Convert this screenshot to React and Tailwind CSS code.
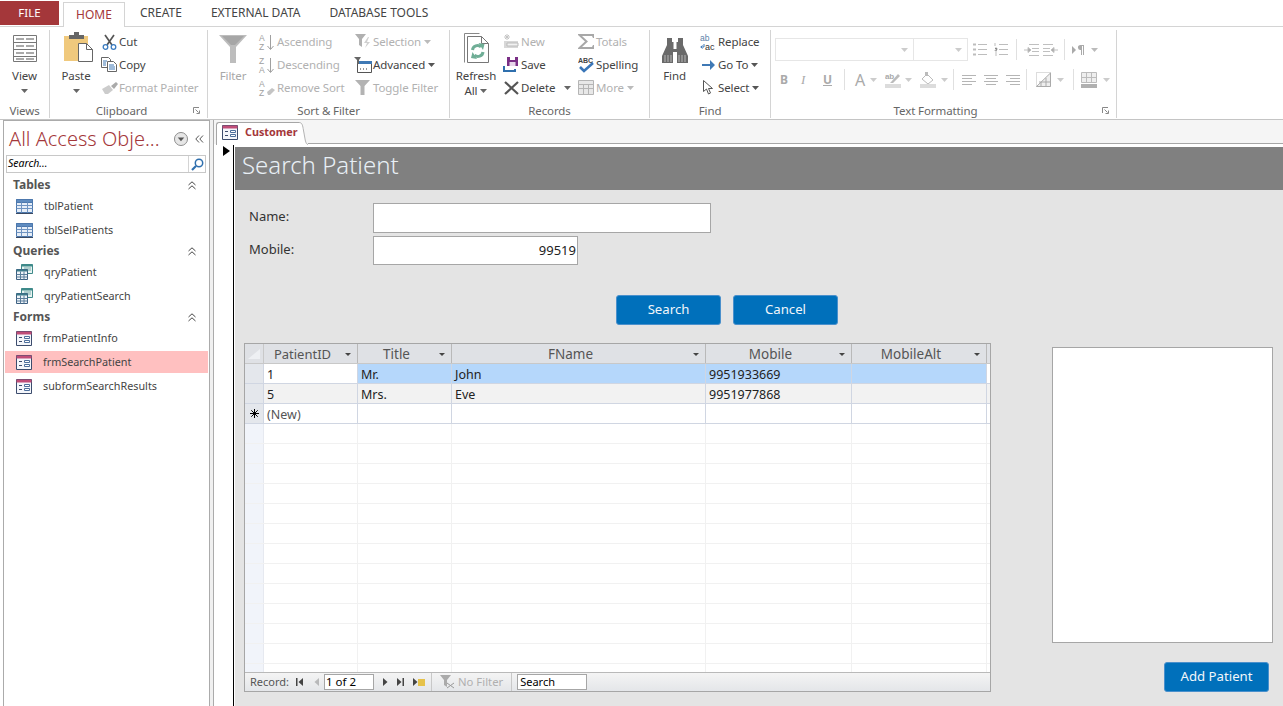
import React from "react";

const Caret = ({ c = "#666", w = 7 }) => (
  <svg width={w} height={w === 7 ? 4 : 3} viewBox="0 0 7 4" preserveAspectRatio="none" className="shrink-0">
    <path d="M0 0h7L3.5 4z" fill={c} />
  </svg>
);

const ViewIcon = () => (
  <svg width="26" height="29" viewBox="0 0 26 29" fill="none" stroke="#777">
    <path d="M1.5 1.5h23M1.5 8.5h23M1.500 15.500h23M1.500 22.500h23M1.500 27.500h23M1.500 1.500v26M24.500 1.500v26" />
    <path d="M4 5h8M4 12h8M4 19h8M4 25h8M14 5h8M14 12h8M14 19h8M14 25h8" stroke="#aaa" strokeWidth="2" />
  </svg>
);
const PasteIcon = () => (
  <svg width="30" height="32" viewBox="0 0 30 32" className="ml-[5px]">
    <path d="M0 5h24v25H0z" fill="#f0c97d" />
    <path d="M5 4h5V1h5v3h5v4H5z" fill="#666" />
    <path d="M14.500 12.500h8l6 6v12h-14z" fill="#fff" stroke="#666" />
    <path d="M22.500 12.500v6h6" fill="none" stroke="#666" />
  </svg>
);
const CutIcon = () => (
  <svg width="15" height="16" viewBox="0 0 15 16" fill="none">
    <path d="M3 1l7 10M12 1L5 11" stroke="#555" strokeWidth="1.700" />
    <circle cx="3.500" cy="13" r="2.300" stroke="#3b7cc0" strokeWidth="1.300" />
    <circle cx="11.500" cy="13" r="2.300" stroke="#3b7cc0" strokeWidth="1.300" />
  </svg>
);
const CopyIcon = () => (
  <svg width="16" height="15" viewBox="0 0 16 15" fill="#fff" stroke="#666">
    <path d="M.5.5h7l2 2v8h-9z" />
    <path d="M6.500 4.500h6l3 3v7h-9z" />
    <path d="M2 4h4M2 6h3M2 8h3M8 8h5M8 10h6M8 12h6" stroke="#3f79b5" />
  </svg>
);
const PainterIcon = () => (
  <svg width="17" height="14" viewBox="0 0 17 14">
    <path d="M1 8l7-4 4 5-5 4H4z" fill="#ccc" />
    <path d="M10 5l5-4 2 2-4 5z" fill="#aaa" />
  </svg>
);
const FunnelBig = () => (
  <svg width="28" height="28" viewBox="0 0 28 28">
    <path d="M0 0h28L17 12v16h-6V12z" fill="#bdbdbd" />
    <path d="M3 1h22l-9 9h-4z" fill="#a6a6a6" />
  </svg>
);
const SortIcon = ({ a, b, eraser }) => (
  <svg width="17" height="18" viewBox="0 0 17 18" className="overflow-visible">
    <text x="0" y="7.500" fontSize="8.500" fontFamily="Liberation Sans" fill="#a0a0a0">{a}</text>
    <text x="0" y="17" fontSize="8.500" fontFamily="Liberation Sans" fill="#a0a0a0">{b}</text>
    {eraser ? (
      <path d="M8 13l5-4 3 2-5 5H9z" fill="#c4c4c4" />
    ) : (
      <path d="M11.500 2v14M8.500 13l3 3.500 3-3.500" fill="none" stroke="#a0a0a0" />
    )}
  </svg>
);
const SelectionIcon = () => (
  <svg width="17" height="15" viewBox="0 0 17 15">
    <path d="M0 0h11L7 5v8l-3-2V5z" fill="#b0b0b0" />
    <path d="M13 3l-4 6h3l-2 5 5-6h-3l2-5z" fill="#d0d0d0" />
  </svg>
);
const AdvancedIcon = () => (
  <svg width="18" height="16" viewBox="0 0 18 16">
    <path d="M3.500 4.500h14v11h-14z" fill="#fff" stroke="#555" />
    <path d="M4 4h14v3H4z" fill="#3f79b5" />
    <path d="M6 12h1M9 12h1M12 12h1" stroke="#333" />
    <path d="M0 0h7L5 3v4H3V3z" fill="#666" />
  </svg>
);
const ToggleIcon = () => (
  <svg width="16" height="15" viewBox="0 0 16 15">
    <path d="M0 0h15L9.500 6v9h-4V6z" fill="#b3b3b3" />
  </svg>
);
const RefreshIcon = () => (
  <svg width="25" height="30" viewBox="0 0 25 30" fill="none">
    <path d="M.5 29.500V.5h15" stroke="#888" />
    <path d="M3.500 29.500V3.500h14l7 7v19z" fill="#fff" stroke="#777" />
    <path d="M17.500 3.500v7h7" stroke="#777" />
    <path d="M8.500 17a5 5 0 0 1 8.500-3M19 19a5 5 0 0 1-8.500 3" stroke="#6fae96" strokeWidth="3" />
    <path d="M14.500 10l6 1-1.500 6zM13 26l-6-1 1.500-6z" fill="#6fae96" />
  </svg>
);
const NewIcon = () => (
  <svg width="16" height="15" viewBox="0 0 16 15">
    <path d="M1 7h14v7H1z" fill="#d8d8d8" />
    <path d="M4 9h11v3H4z" fill="#f2f2f2" stroke="#bbb" />
    <path d="M4 0v6M1 3h6M2 1l4 4M6 1L2 5" stroke="#c4c4c4" />
  </svg>
);
const SaveIcon = () => (
  <svg width="16" height="15" viewBox="0 0 16 15">
    <path d="M4 0h11v9H4z" fill="#7a2f86" />
    <path d="M7 0h5v3H7z" fill="#fff" />
    <path d="M6.500 5h6v4h-6z" fill="#e7d6ea" />
    <path d="M0 9h2v4h9v-1h2v3H0z" fill="#2f6fad" />
  </svg>
);
const DeleteIcon = () => (
  <svg width="15" height="14" viewBox="0 0 15 14">
    <path d="M1 1l13 12M14 1L1 13" stroke="#555" strokeWidth="2.200" />
  </svg>
);
const SigmaIcon = () => (
  <svg width="17" height="15" viewBox="0 0 17 15">
    <path d="M0 0h16v4h-1l-1-2H4l6 5.500L4 13h10l1-2h1v4H0v-1l7-6.500L0 1z" fill="#a8a8a8" />
  </svg>
);
const SpellIcon = () => (
  <svg width="17" height="17" viewBox="0 0 17 17">
    <text x="0" y="6.500" fontSize="7" fontWeight="700" fontFamily="Liberation Sans" fill="#444">ABC</text>
    <path d="M2 11l4 4 9-8" fill="none" stroke="#3a76b8" strokeWidth="2.600" />
  </svg>
);
const MoreIcon = () => (
  <svg width="16" height="15" viewBox="0 0 16 15" fill="#e8e8e8" stroke="#b5b5b5">
    <path d="M.5.5h15v14H.5z" />
    <path d="M.5 4.500h15M.5 8.500h15M5.500 4.500v10M10.500 4.500v10" fill="none" />
  </svg>
);
const BinocularsIcon = () => (
  <svg width="26" height="25" viewBox="0 0 26 25">
    <path d="M5 0h5v4h1.500v7h3V4H16V0h5v7l5 11v7H15V14h-4v11H0v-7L5 7z" fill="#6a6a6a" />
    <path d="M3 17v7M6 17v7M9 17v7M17 17v7M20 17v7M23 17v7" stroke="#b8b8b8" />
  </svg>
);
const ReplaceIcon = () => (
  <svg width="17" height="18" viewBox="0 0 17 18" className="overflow-visible">
    <text x="0" y="7.500" fontSize="8.500" fontFamily="Liberation Sans" fill="#5a7fa8">ab</text>
    <text x="5" y="17" fontSize="9" fontFamily="Liberation Sans" fill="#333">ac</text>
    <path d="M4 11v3H.8M2.500 12.500L.8 14l1.700 1.500" stroke="#3a76b8" fill="none" />
  </svg>
);
const GoToIcon = () => (
  <svg width="13" height="10" viewBox="0 0 13 10">
    <path d="M0 4h8V0l5 5-5 5V6H0z" fill="#3f79b5" />
  </svg>
);
const CursorIcon = () => (
  <svg width="10" height="15" viewBox="0 0 10 15">
    <path d="M.5.5v11l3-2.500 2 5 2-1-2-4.500h4z" fill="#fff" stroke="#555" />
  </svg>
);
const Launcher = () => (
  <svg width="7" height="7" viewBox="0 0 7 7" fill="none" stroke="#888">
    <path d="M.5 6V.5H6" />
    <path d="M2.500 2.500l3 3M6.500 3.500v3h-3" />
  </svg>
);

const BulletsIcon = ({ num }) => (
  <svg width="14" height="15" viewBox="0 0 14 15" stroke="#bdbdbd">
    <path d="M5 2.500h9M5 7.500h9M5 12.500h9" />
    {num ? <path d="M1 1v3M1 6h2v2H1v1h2M1 11h2M1 13h2" /> : <path d="M0 2.500h3M0 7.500h3M0 12.500h3" strokeWidth="2" />}
  </svg>
);
const IndentIcon = ({ flip }) => (
  <svg width="15" height="12" viewBox="0 0 15 12" stroke="#c0c0c0" className={flip ? "-scale-x-100" : ""}>
    <path d="M5 .5h10M8 4.500h7M8 7.500h7M5 11.500h10M0 6h6" />
    <path d="M4 3.500L7 6 4 8.500z" fill="#a8a8a8" />
  </svg>
);
const ParaIcon = () => (
  <svg width="12" height="10" viewBox="0 0 12 10">
    <path d="M0 1l4 4-4 4z" fill="#aaa" />
    <path d="M8 0h4v10h-1V1h-1v9H9V5a2.500 2.500 0 0 1-1-5z" fill="#aaa" />
  </svg>
);
const HighlightIcon = () => (
  <svg width="16" height="16" viewBox="0 0 16 16">
    <text x="0" y="7" fontSize="8" fontFamily="Liberation Sans" fill="#aaa">ab</text>
    <path d="M6 10l7-8 2 2-7 7H5z" fill="#bbb" />
    <path d="M0 12h16v4H0z" fill="#dcdcdc" />
  </svg>
);
const FillIcon = () => (
  <svg width="16" height="16" viewBox="0 0 16 16">
    <path d="M2 7l5-5 6 6-5 4z" fill="#fff" stroke="#bbb" />
    <path d="M5 0h3v4H5z" fill="#bbb" />
    <path d="M0 12h16v4H0z" fill="#dcdcdc" />
  </svg>
);
const AlignIcon = ({ mode }) => {
  const d = {
    left: "M0 .5h14M0 3.500h10M0 6.500h14M0 9.500h10",
    center: "M0 .5h14M2 3.500h10M0 6.500h14M2 9.500h10",
    right: "M0 .5h14M4 3.500h10M0 6.500h14M4 9.500h10",
  };
  return (
    <svg width="14" height="10" viewBox="0 0 14 10" stroke="#b5b5b5">
      <path d={d[mode]} />
    </svg>
  );
};
const GridBgIcon = () => (
  <svg width="15" height="15" viewBox="0 0 15 15" fill="none">
    <path d="M.5.5h14v14H.5z" stroke="#bbb" strokeDasharray="1 1" />
    <path d="M.5 14.500L14.500 1v13.500zM5 14V10M10 14V6M3 10h11" fill="#eee" stroke="#aaa" />
  </svg>
);
const GridLineIcon = () => (
  <svg width="16" height="16" viewBox="0 0 16 16" fill="none">
    <path d="M.5.5h15v10H.5zM.5 5.500h15M5.500.5v10M10.500.5v10" stroke="#bbb" fill="#eee" />
    <path d="M0 12h16v4H0z" fill="#b0b0b0" />
  </svg>
);

const TableIcon = () => (
  <svg width="17" height="15" viewBox="0 0 17 15" className="shrink-0">
    <path d="M.5.5h16v13H.5z" fill="#e6eef8" stroke="#4d78ad" />
    <path d="M.5.5h16v3H.5z" fill="#5f8cc0" stroke="#4d78ad" />
    <path d="M.5 6.500h16M.5 9.500h16M5.500 3.500v10M11.500 3.500v10" stroke="#6f94c2" fill="none" />
    <path d="M0 14.500h17" stroke="#3a4a63" />
  </svg>
);
const QueryIcon = () => (
  <svg width="17" height="16" viewBox="0 0 17 16" className="shrink-0">
    <path d="M5.500.5h11v9h-11z" fill="#e8f3f2" stroke="#3f8a8a" />
    <path d="M5.500.5h11v2h-11z" fill="#3f8a8a" />
    <path d="M8 4h7M8 6h7" stroke="#7aa" />
    <path d="M.5 5.500h11v10H.5z" fill="#eef3f8" stroke="#3d5f80" />
    <path d="M.5 5.500h11v2h-11z" fill="#3d7a8a" />
    <path d="M.5 10.500h11M.5 13h11M4.500 7.500v8M8 7.500v8" stroke="#5a7d9a" fill="none" />
  </svg>
);
const FormIcon = () => (
  <svg width="16" height="15" viewBox="0 0 16 15" className="shrink-0">
    <path d="M.5.5h15v14H.5z" fill="#f4f6fb" stroke="#3c4c6d" />
    <path d="M.5.5h15v3H.5z" fill="#c04d78" />
    <path d="M3 6.500h3M3 10.500h3" stroke="#3c4c6d" />
    <path d="M8.500 5.500h5v2h-5zM8.500 9.500h5v2h-5z" fill="#fff" stroke="#4d6f9c" />
  </svg>
);
const DoubleUp = () => (
  <svg width="8" height="9" viewBox="0 0 8 9" fill="none" stroke="#444">
    <path d="M.5 4L4 .8 7.500 4M.5 8L4 4.800 7.500 8" />
  </svg>
);

const Small = ({ icon, label, off, caret, w, tail }) => (
  <div className="flex h-[23px] items-center">
    <div className={`flex h-full shrink-0 items-center justify-center ${w || "w-[18px]"}`}>{icon}</div>
    <span className={`ml-px whitespace-nowrap ${off ? "text-[#b1b1b1]" : "text-[#444]"}`}>{label}</span>
    {caret && <span className="ml-[3px]"><Caret c={off ? "#bbb" : "#555"} /></span>}
    {tail}
  </div>
);

const Group = ({ w, label, launcher, labelCls, children }) => (
  <div className={`flex h-[88px] shrink-0 flex-col border-r border-[#d4d4d4] ${w}`}>
    <div className="flex h-[73px]">{children}</div>
    <div className={`relative flex h-[15px] items-center justify-center text-[#666] ${labelCls || ""}`}>
      {label}
      {launcher && <span className="absolute right-[7px] top-[4px] flex"><Launcher /></span>}
    </div>
  </div>
);

const Big = ({ icon, children, off, w, h = "h-[33px]" }) => (
  <div className={`flex shrink-0 flex-col items-center ${w}`}>
    <div className={`flex items-end justify-center pt-[3px] ${h}`}>{icon}</div>
    <div className={`mt-[5px] flex flex-col items-center leading-[15px] ${off ? "text-[#a8a8a8]" : "text-[#444]"}`}>{children}</div>
  </div>
);

const Ribbon = () => (
  <div className="flex h-[92px] items-start bg-white pt-[3px] text-[11.500px] tracking-[-0.1px]">
    <Group w="w-[50px]" label="Views">
      <Big w="w-[49px]" icon={<ViewIcon />}>
        <span>View</span>
        <span className="mt-[6px]"><Caret /></span>
      </Big>
    </Group>
    <Group w="w-[158px]" label="Clipboard" launcher labelCls="pr-[14px]">
      <Big w="w-[52px] -mr-[2px]" icon={<PasteIcon />}>
        <span>Paste</span>
        <span className="mt-[6px]"><Caret /></span>
      </Big>
      <div className="flex flex-col">
        <Small icon={<CutIcon />} label="Cut" />
        <Small icon={<CopyIcon />} label="Copy" />
        <Small icon={<PainterIcon />} label="Format Painter" off />
      </div>
    </Group>
    <Group w="w-[242px]" label="Sort & Filter">
      <Big w="w-[50px]" off icon={<FunnelBig />}>
        <span>Filter</span>
      </Big>
      <div className="flex w-[96px] flex-col">
        <Small icon={<SortIcon a="A" b="Z" />} label="Ascending" off />
        <Small icon={<SortIcon a="Z" b="A" />} label="Descending" off />
        <Small icon={<SortIcon a="A" b="Z" eraser />} label="Remove Sort" off />
      </div>
      <div className="flex flex-col">
        <Small icon={<SelectionIcon />} label="Selection" off caret />
        <Small icon={<AdvancedIcon />} label="Advanced" caret />
        <Small icon={<ToggleIcon />} label="Toggle Filter" off />
      </div>
    </Group>
    <Group w="w-[200px]" label="Records">
      <Big w="w-[52px]" icon={<RefreshIcon />}>
        <span>Refresh</span>
        <span className="flex items-center gap-[3px]">All <Caret /></span>
      </Big>
      <div className="flex w-[75px] flex-col">
        <Small icon={<NewIcon />} label="New" off />
        <Small icon={<SaveIcon />} label="Save" />
        <Small icon={<DeleteIcon />} label="Delete" tail={<span className="ml-[9px]"><Caret /></span>} />
      </div>
      <div className="flex flex-col">
        <Small icon={<SigmaIcon />} label="Totals" off />
        <Small icon={<SpellIcon />} label="Spelling" />
        <Small icon={<MoreIcon />} label="More" off caret />
      </div>
    </Group>
    <Group w="w-[121px]" label="Find">
      <Big w="w-[49px]" icon={<BinocularsIcon />}>
        <span>Find</span>
      </Big>
      <div className="flex flex-col">
        <Small icon={<ReplaceIcon />} label="Replace" />
        <Small icon={<GoToIcon />} label="Go To" caret />
        <Small icon={<CursorIcon />} label="Select" caret />
      </div>
    </Group>
    <Group w="w-[346px]" label="Text Formatting" launcher labelCls="pr-[16px]">
      <div className="flex flex-col pl-[4px] pt-[8px]">
        <div className="flex h-[23px] items-center">
          <div className="flex h-[23px] w-[139px] items-center justify-end border border-[#e6e6e6] pr-[5px]"><Caret c="#ccc" /></div>
          <div className="flex h-[23px] w-[54px] items-center justify-end border border-l-0 border-[#e6e6e6] pr-[5px]"><Caret c="#ccc" /></div>
          <div className="ml-[5px]"><BulletsIcon /></div>
          <div className="ml-[7px]"><BulletsIcon num /></div>
          <div className="ml-[8px] h-[21px] w-px bg-[#e0e0e0]" />
          <div className="ml-[7px]"><IndentIcon /></div>
          <div className="ml-[4px]"><IndentIcon flip /></div>
          <div className="ml-[6px] h-[21px] w-px bg-[#e0e0e0]" />
          <div className="ml-[7px]"><ParaIcon /></div>
          <span className="ml-[7px]"><Caret c="#bbb" /></span>
        </div>
        <div className="mt-[7px] flex h-[23px] items-center font-bold text-[#aaa]">
          <span className="ml-[5px] w-[21px] text-[12px] leading-none">B</span>
          <span className="w-[22px] font-['Liberation_Serif'] text-[13px] font-normal italic leading-none">I</span>
          <span className="w-[13px] text-[12px] leading-none underline">U</span>
          <div className="ml-[8px] h-[21px] w-px bg-[#e0e0e0]" />
          <span className="ml-[10px] text-[16px] font-normal leading-none">A</span>
          <span className="ml-[5px]"><Caret c="#ccc" /></span>
          <div className="ml-[8px]"><HighlightIcon /></div>
          <span className="ml-[4px]"><Caret c="#ccc" /></span>
          <div className="ml-[8px]"><FillIcon /></div>
          <span className="ml-[5px]"><Caret c="#ccc" /></span>
          <div className="ml-[5px] h-[21px] w-px bg-[#e0e0e0]" />
          <div className="ml-[8px]"><AlignIcon mode="left" /></div>
          <div className="ml-[8px]"><AlignIcon mode="center" /></div>
          <div className="ml-[8px]"><AlignIcon mode="right" /></div>
          <div className="ml-[6px] h-[21px] w-px bg-[#e0e0e0]" />
          <div className="ml-[9px]"><GridBgIcon /></div>
          <span className="ml-[6px]"><Caret c="#ccc" /></span>
          <div className="ml-[9px] h-[21px] w-px bg-[#e0e0e0]" />
          <div className="ml-[7px]"><GridLineIcon /></div>
          <span className="ml-[6px]"><Caret c="#ccc" /></span>
        </div>
      </div>
    </Group>
  </div>
);

const Tabs = () => (
  <div className="flex h-[27px] items-end border-b border-[#d4d4d4] text-[12px] text-[#444]">
    <div className="mb-px flex h-[24px] w-[59px] items-center justify-center bg-[#a4373a] text-[11.500px] text-white">FILE</div>
    <div className="relative top-px ml-[4px] flex h-[25px] w-[62px] items-center justify-center border border-b-0 border-[#d4d4d4] bg-white text-[#a4373a]">HOME</div>
    <div className="mb-px flex h-[24px] items-center gap-[29px] pl-[15px]">
      <span>CREATE</span>
      <span>EXTERNAL DATA</span>
      <span>DATABASE TOOLS</span>
    </div>
  </div>
);

const NavSection = ({ title }) => (
  <div className="flex h-[18px] items-center justify-between pl-[8px] pr-[12px]">
    <span className="text-[12px] font-bold text-[#555]">{title}</span>
    <DoubleUp />
  </div>
);
const NavItem = ({ icon, label, active }) => (
  <div className="flex h-[24px] items-center py-px">
    <div className={`flex h-[22px] w-full items-center pl-[11px] text-[#444] ${active ? "bg-[#ffc0c0]" : ""}`}>
      {icon}
      <span className="ml-[11px]">{label}</span>
    </div>
  </div>
);

const NavPane = () => (
  <div className="ml-[3px] flex w-[207px] shrink-0 flex-col border-x border-t border-[#ababab] pl-px pr-px text-[10.800px]">
    <div className="flex h-[33px] items-center pl-[4px] pt-[3px]">
      <span className="w-[165px] whitespace-nowrap text-[20px] font-light leading-none text-[#a4373a]">All Access Obje...</span>
      <svg width="14" height="14" viewBox="0 0 15 15">
        <circle cx="7.500" cy="7.500" r="7" fill="#e6e6e6" stroke="#888" />
        <path d="M4 6h7L7.500 10z" fill="#555" />
      </svg>
      <svg width="9" height="8" viewBox="0 0 9 8" fill="none" stroke="#555" className="ml-[7px]">
        <path d="M4 .5L.8 4 4 7.500M8 .5L4.800 4 8 7.500" />
      </svg>
    </div>
    <div className="ml-px mt-px flex h-[18px] w-[200px] items-center justify-between border border-[#c8c8c8]">
      <span className="pl-px text-[10.500px] italic text-black">Search...</span>
      <div className="flex h-full w-[17px] items-center justify-center border-l border-[#d4d4d4]">
        <svg width="13" height="13" viewBox="0 0 13 13" fill="none" stroke="#2f6fad">
          <circle cx="8" cy="5" r="3.700" strokeWidth="1.500" />
          <path d="M5 8l-4 4" strokeWidth="2.200" />
        </svg>
      </div>
    </div>
    <div className="mt-[3px]">
      <NavSection title="Tables" />
      <NavItem icon={<TableIcon />} label="tblPatient" />
      <NavItem icon={<TableIcon />} label="tblSelPatients" />
      <NavSection title="Queries" />
      <NavItem icon={<QueryIcon />} label="qryPatient" />
      <NavItem icon={<QueryIcon />} label="qryPatientSearch" />
      <NavSection title="Forms" />
      <NavItem icon={<FormIcon />} label="frmPatientInfo" />
      <NavItem icon={<FormIcon />} label="frmSearchPatient" active />
      <NavItem icon={<FormIcon />} label="subformSearchResults" />
    </div>
  </div>
);

const columns = [
  { name: "PatientID", w: "w-[94px]", text: "text-[13px]" },
  { name: "Title", w: "w-[94px]", text: "text-[13.500px]" },
  { name: "FName", w: "w-[254px]", text: "text-[13.500px]" },
  { name: "Mobile", w: "w-[146px]", text: "text-[13.500px]" },
  { name: "MobileAlt", w: "w-[135px]", text: "text-[13.500px]" },
];
const rows = [
  { mark: "", cells: ["1", "Mr.", "John", "9951933669", ""], current: true },
  { mark: "", cells: ["5", "Mrs.", "Eve", "9951977868", ""], alt: true },
  { mark: "new", cells: ["(New)", "", "", "", ""] },
];

const NavGlyph = ({ d }) => (
  <svg width="9" height="8" viewBox="0 0 9 8" fill="#444"><path d={d} /></svg>
);

const Datasheet = () => (
  <div className="flex h-[349px] w-[747px] flex-col border border-[#a6a6a6] bg-white text-[12.500px]">
    <div className="flex h-[20px] shrink-0 border-b border-[#c8c8c8] bg-[#dfe1e5]">
      <div className="flex w-[19px] items-center justify-center border-r border-[#c8c8c8]">
        <svg width="12" height="10" viewBox="0 0 12 10"><path d="M12 0v10H0z" fill="#eef0f3" /></svg>
      </div>
      {columns.map((c) => (
        <div key={c.name} className={`relative flex items-center justify-center border-r border-[#b9b9b9] pr-[16px] pt-[2px] text-[#555] ${c.w} ${c.text}`}>
          <span>{c.name}</span>
          <span className="absolute right-[6px] top-[9px] flex"><Caret c="#444" w={6} /></span>
        </div>
      ))}
    </div>
    {rows.map((r, i) => (
      <div key={i} className={`flex h-[20px] shrink-0 border-b border-[#d0d6e2] ${r.alt ? "bg-[#f2f2f2]" : "bg-white"}`}>
        <div className="flex w-[19px] items-center justify-center border-r border-[#d0d6e2] bg-[#e4e7ec]">
          {r.mark === "new" && (
            <svg width="9" height="9" viewBox="0 0 9 9" stroke="#000">
              <path d="M4.500 0v9M0 4.500h9M1.300 1.300l6.400 6.400M7.700 1.300L1.300 7.700" />
            </svg>
          )}
        </div>
        {columns.map((c, j) => (
          <div
            key={c.name}
            className={`flex items-center border-r border-[#d0d6e2] pl-[3px] pt-[3px] ${c.w} ${i === 2 ? "text-[#555]" : "text-[#222]"} ${r.current && j > 0 ? "bg-[#b5d7fb]" : ""}`}
          >
            {r.cells[j]}
          </div>
        ))}
      </div>
    ))}
    <div className="flex min-h-0 flex-1 flex-col overflow-hidden">
      {Array.from({ length: 13 }).map((_, i) => (
        <div key={i} className="flex h-[20px] shrink-0 border-b border-[#f1f1f1]">
          <div className="w-[19px] border-r border-[#e6e9f0] bg-[#f1f4fa]" />
          {columns.map((c) => (
            <div key={c.name} className={`border-r border-[#f1f1f1] ${c.w}`} />
          ))}
        </div>
      ))}
    </div>
    <div className="flex h-[19px] shrink-0 items-center border-t border-[#b9b9b9] bg-gradient-to-b from-[#f4f4f4] to-[#e4e6e9] pl-[5px] text-[11px] text-[#555]">
      <span className="w-[39px] whitespace-nowrap">Record:</span>
      <span className="ml-[7px]"><NavGlyph d="M0 0h1.500v8H0zM7 0v8L2.500 4z" /></span>
      <span className="ml-[7px] opacity-30"><NavGlyph d="M7 0v8L2.500 4z" /></span>
      <div className="ml-[3px] flex h-[16px] w-[50px] items-center border border-[#a6a6a6] bg-white pl-px text-[11.500px] text-black">1 of 2</div>
      <span className="ml-[7px]"><NavGlyph d="M2 0l4.500 4L2 8z" /></span>
      <span className="ml-[6px]"><NavGlyph d="M1 0l4.500 4L1 8zM6.500 0H8v8H6.500z" /></span>
      <span className="ml-[7px] flex items-center">
        <NavGlyph d="M1 0l4.500 4L1 8z" />
        <span className="-ml-[3px] h-[7px] w-[7px] bg-[#e6c24a]" />
      </span>
      <div className="ml-[6px] flex h-full items-center border-x border-[#c8c8c8] pl-[8px] pr-[8px] text-[11.300px] text-[#b0b0b0]">
        <svg width="15" height="14" viewBox="0 0 15 14" className="mr-[3px]">
          <path d="M0 0h11L7 5v7L4 10V5z" fill="#aaa" />
          <path d="M7 8l7 5M14 8l-7 5" stroke="#999" />
        </svg>
        No Filter
      </div>
      <div className="ml-[5px] flex h-[16px] w-[70px] items-center border border-[#a6a6a6] bg-white pl-[2px] text-black">Search</div>
    </div>
  </div>
);

const Btn = ({ children }) => (
  <button className="flex h-[30px] w-[105px] items-center justify-center rounded-[3px] border border-[#4a90cc] bg-[#0070bb] text-[13.200px] text-[#f2f6fa]">
    {children}
  </button>
);

const Form = () => (
  <div className="ml-px flex min-w-0 flex-1 flex-col pt-[3px]">
    <div className="flex h-[43px] shrink-0 items-center bg-[#808080] pb-[8px] pl-[7px] text-[24px] font-light text-[#e8eff5]">
      Search Patient
    </div>
    <div className="flex flex-1 bg-[#e4e4e4] text-[13px] text-[#333]">
      <div className="ml-[9px] flex w-[747px] shrink-0 flex-col">
        <div className="mt-[13px] flex items-center">
          <span className="ml-[5px] w-[124px] -translate-y-px">Name:</span>
          <div className="h-[30px] w-[338px] border border-[#a6a6a6] bg-white" />
        </div>
        <div className="mt-[3px] flex items-center">
          <span className="ml-[5px] w-[124px] -translate-y-px">Mobile:</span>
          <div className="flex h-[29px] w-[205px] items-center justify-end border border-[#a6a6a6] bg-white pr-px text-[#222]">99519</div>
        </div>
        <div className="ml-[372px] mt-[30px] flex gap-[12px]">
          <Btn>Search</Btn>
          <Btn>Cancel</Btn>
        </div>
        <div className="mt-[18px]">
          <Datasheet />
        </div>
      </div>
      <div className="ml-[61px] flex flex-col pt-[157px]">
        <div className="h-[296px] w-[221px] border border-[#a6a6a6] bg-white" />
        <div className="ml-[112px] mt-[19px]">
          <Btn>Add Patient</Btn>
        </div>
      </div>
    </div>
  </div>
);

const DocArea = () => (
  <div className="flex min-w-0 flex-1 flex-col">
    <div className="flex h-[24px] shrink-0 items-end bg-[#f5f5f5]">
      <div className="relative top-px ml-[2px] flex h-[24px] items-center">
        <div className="flex h-[23px] w-[83px] items-center rounded-tl-[3px] border-l border-t border-[#a6a6a6] bg-white pb-[2px] pl-[5px]">
          <FormIcon />
          <span className="ml-[7px] whitespace-nowrap text-[10.800px] font-bold text-[#a4373a]">Customer</span>
        </div>
        <svg width="9" height="23" viewBox="0 0 13 23" preserveAspectRatio="none" className="self-end">
          <path d="M0 .5c4 0 5 2 6 6L9 18c1 3 2 4.500 4 4.500H0z" fill="#fff" />
          <path d="M0 .5c4 0 5 2 6 6L9 18c1 3 2 4.500 4 4.500" fill="none" stroke="#a6a6a6" />
        </svg>
      </div>
      <div className="h-px flex-1 bg-[#a6a6a6]" />
    </div>
    <div className="flex min-h-0 flex-1">
      <div className="w-[19px] shrink-0 pl-[9px] pt-[2px]">
        <svg width="7" height="10" viewBox="0 0 7 10"><path d="M0 0l7 5-7 5z" fill="#000" /></svg>
      </div>
      <div className="w-px shrink-0 bg-black" />
      <Form />
    </div>
  </div>
);

export default function App() {
  return (
    <div className="flex h-[706px] w-[1283px] flex-col overflow-hidden bg-white font-['Noto_Sans',sans-serif]">
      <Tabs />
      <Ribbon />
      <div className="flex min-h-0 flex-1 border-t border-[#c4c4c4] bg-white">
        <NavPane />
        <div className="w-[3px] shrink-0 bg-[#f0f0f0]" />
        <div className="w-px shrink-0 bg-[#ababab]" />
        <DocArea />
      </div>
    </div>
  );
}
